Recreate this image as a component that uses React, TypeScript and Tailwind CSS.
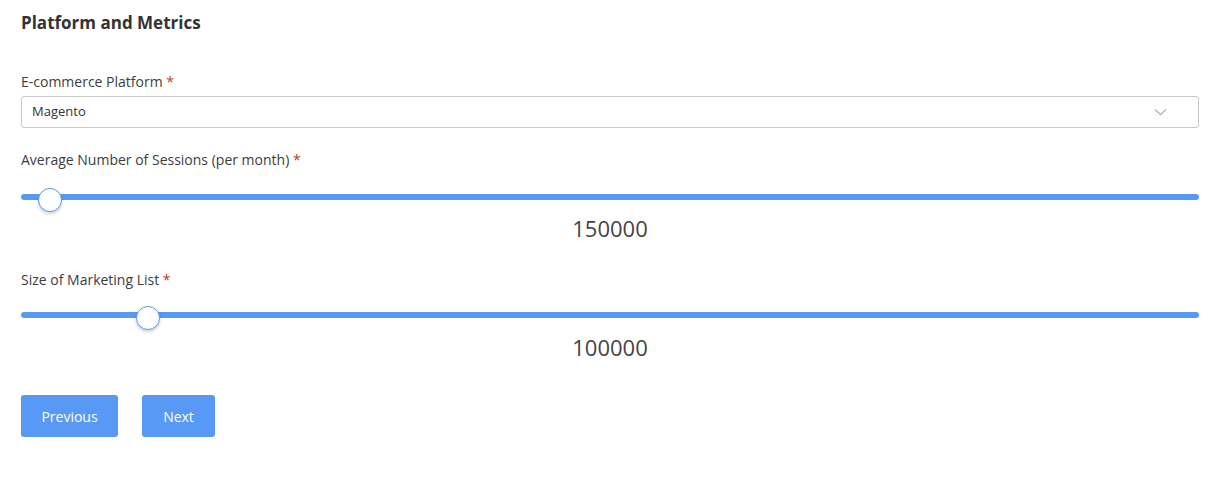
import { useState } from 'react';

interface RangeProps {
  value: number;
  min: number;
  max: number;
}

function Range({ value, min, max }: RangeProps) {
  const pct = ((value - min) / (max - min)) * 100;
  return (
    <div className="relative h-[24px]">
      <div className="absolute left-0 right-0 top-[6px] h-[6px] rounded-full bg-[#5799f4]" />
      <div
        className="absolute top-0 h-[24px] w-[24px] rounded-full border border-[#5799f4] bg-white shadow-[0_2px_3px_rgba(0,0,0,0.18)]"
        style={{ left: `calc((100% - 24px) * ${pct / 100})` }}
      />
    </div>
  );
}

function Label({ text }: { text: string }) {
  return (
    <label className="block text-[14px] leading-[22px] text-[#3d3d3d]">
      {text} <span className="text-[#c0392b]">*</span>
    </label>
  );
}

export default function App() {
  const [platform] = useState('Magento');

  return (
    <div className="min-h-[478px] bg-white pl-[21px] pr-[13px] pt-[10px] font-['Open_Sans',sans-serif] text-[#333]">
      <h2 className="text-[17px] font-bold leading-[26px] text-[#333]">Platform and Metrics</h2>

      <div className="mt-[35px]">
        <Label text="E-commerce Platform" />
      </div>
      <div className="mt-[3px] flex h-[32px] items-center justify-between rounded-[3px] border border-[#c9c9c9] pl-[10px] pr-[31px]">
        <span className="text-[13px] text-[#333]">{platform}</span>
        <svg width="13" height="8" viewBox="0 0 13 8" fill="none">
          <path d="M1 1.5l5.5 5 5.5-5" stroke="#b8b8b8" strokeWidth="1.5" />
        </svg>
      </div>

      <div className="mt-[21px]">
        <Label text="Average Number of Sessions (per month)" />
      </div>
      <div className="mt-[17px]">
        <Range value={150000} min={100000} max={3500000} />
      </div>
      <div className="mt-[2px] text-center text-[22px] leading-[28px] text-[#444]">150000</div>

      <div className="mt-[27px]">
        <Label text="Size of Marketing List" />
      </div>
      <div className="mt-[15px]">
        <Range value={100000} min={0} max={1000000} />
      </div>
      <div className="mt-[3px] text-center text-[22px] leading-[28px] text-[#444]">100000</div>

      <div className="mt-[34px] flex gap-[24px]">
        <button className="h-[42px] w-[97px] rounded-[3px] bg-[#5799f4] text-[14px] text-white">Previous</button>
        <button className="h-[42px] w-[73px] rounded-[3px] bg-[#5799f4] text-[14px] text-white">Next</button>
      </div>
    </div>
  );
}
